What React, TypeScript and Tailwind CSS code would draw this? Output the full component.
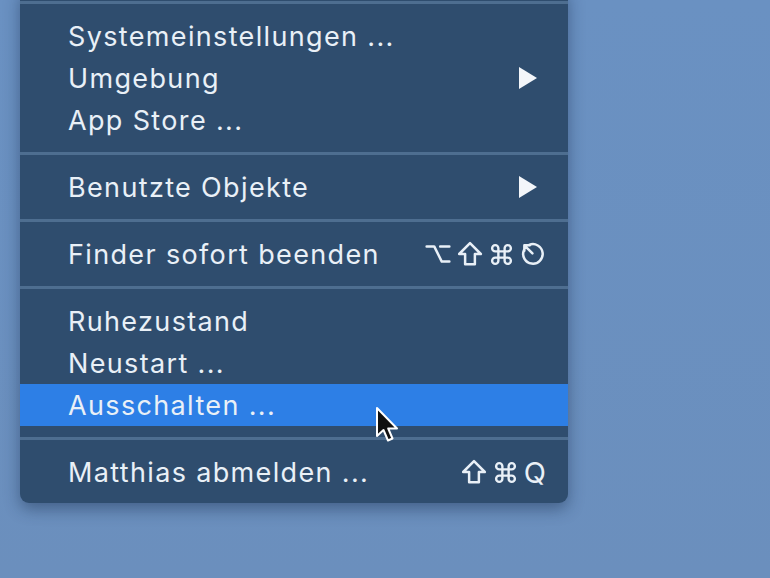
import React from "react";
import { Command } from "lucide-react";

type Item = {
  label: string;
  submenu?: boolean;
  shortcut?: string[];
  active?: boolean;
};

const sections: Item[][] = [
  [
    { label: "Systemeinstellungen ..." },
    { label: "Umgebung", submenu: true },
    { label: "App Store ..." },
  ],
  [{ label: "Benutzte Objekte", submenu: true }],
  [{ label: "Finder sofort beenden", shortcut: ["opt", "shift", "cmd", "esc"] }],
  [
    { label: "Ruhezustand" },
    { label: "Neustart ..." },
    { label: "Ausschalten ...", active: true },
  ],
  [{ label: "Matthias abmelden ...", shortcut: ["shift", "cmd", "Q"] }],
];

const Separator = () => (
  <div className="h-[25px] flex items-center">
    <div className="h-[3px] w-full bg-[#4e6e90]" />
  </div>
);

const Cursor = () => (
  <svg
    className="absolute left-[352px] top-[22px]"
    width="30"
    height="40"
    viewBox="0 0 30 40"
  >
    <path
      d="M5 2 L5 30 L11.5 24 L16 34.5 L20.5 32.5 L16.2 22.5 L25 22.5 Z"
      fill="#111"
      stroke="#fff"
      strokeWidth="2"
      strokeLinejoin="round"
    />
  </svg>
);

const KeySymbol = ({ k }: { k: string }) => {
  const common = {
    width: 26,
    height: 26,
    viewBox: "0 0 24 24",
    fill: "none",
    stroke: "#e9f0f7",
    strokeWidth: 2.3,
    strokeLinejoin: "round" as const,
    strokeLinecap: "round" as const,
  };
  if (k === "opt")
    return (
      <svg {...common}>
        <path d="M1.5 5 H8.5 L15.5 19 H22.5 M14 5 H22.5" />
      </svg>
    );
  if (k === "shift")
    return (
      <svg {...common}>
        <path d="M12 2 L22 12 H16.5 V21.5 H7.5 V12 H2 Z" />
      </svg>
    );
  if (k === "cmd") return <Command size={25} color="#e9f0f7" strokeWidth={2.3} />;
  if (k === "esc")
    return (
      <svg {...common}>
        <path d="M8.5 3.6 A9 9 0 1 1 3.6 8.5" />
        <path d="M4 4 L11.5 11.5 M4 9 V4 H9" />
      </svg>
    );
  return (
    <span className="text-[29px] leading-none text-[#e9f0f7] font-['Inter',sans-serif]">
      {k}
    </span>
  );
};

const MenuRow = ({ item }: { item: Item }) => (
  <div
    className={`relative h-[42px] flex items-center justify-between pl-[48px] pr-[22px] ${
      item.active ? "bg-[#2d7fe6]" : ""
    }`}
  >
    <span className="text-[27px] leading-none tracking-[1.35px] text-[#e9f0f7] font-['Inter',sans-serif]">
      {item.label}
    </span>
    {item.submenu && (
      <svg width="20" height="22" viewBox="0 0 20 22" className="mr-[8px]">
        <path d="M1 0 L19 11 L1 22 Z" fill="#f3f6fa" />
      </svg>
    )}
    {item.shortcut && (
      <div className="flex items-center gap-[6px]">
        {item.shortcut.map((k) => (
          <KeySymbol key={k} k={k} />
        ))}
      </div>
    )}
    {item.active && <Cursor />}
  </div>
);

export default function App() {
  return (
    <div className="w-[770px] h-[578px] overflow-hidden bg-gradient-to-b from-[#6a91c2] to-[#6b8fbd]">
      <div className="ml-[20px] w-[548px] -mt-[10px] bg-[#2f4d6e] rounded-b-[9px] pb-[10px] shadow-[0_6px_16px_rgba(20,40,70,0.45)]">
        {sections.map((sec, i) => (
          <div key={i}>
            <Separator />
            {sec.map((item) => (
              <MenuRow key={item.label} item={item} />
            ))}
          </div>
        ))}
      </div>
    </div>
  );
}
